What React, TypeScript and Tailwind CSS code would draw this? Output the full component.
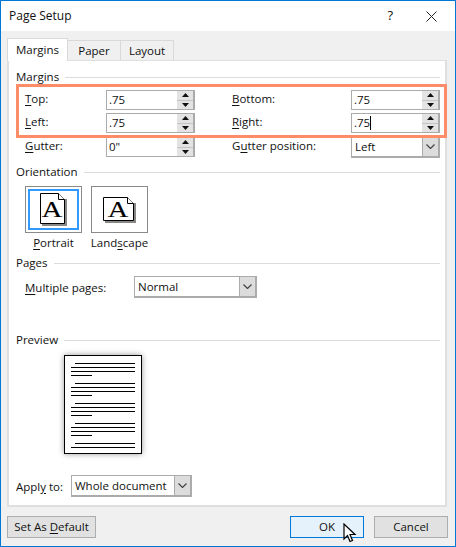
import React from 'react';

const font = { fontFamily: '"Open Sans", "Noto Sans", sans-serif' };

const U: React.FC<{ children: React.ReactNode }> = ({ children }) => <span className="underline underline-offset-2">{children}</span>;

const SectionLabel: React.FC<{ text: string; className?: string }> = ({ text, className }) => (
  <div className={`flex items-center h-4 gap-[6px] ${className ?? ''}`}>
    <span className="text-[11.5px] leading-4 whitespace-nowrap">{text}</span>
    <div className="flex-1 h-px bg-[#dcdcdc]" />
  </div>
);

const Spinner: React.FC<{ value: string; caret?: boolean }> = ({ value, caret }) => (
  <div className="w-[89px] h-[20px] border border-r-2 border-[#ababab] bg-white flex items-center pl-[2px]">
    <span className="flex-1 text-[11.5px] leading-4 flex items-center">
      {value}
      {caret && <span className="inline-block w-px h-[14px] bg-black" />}
    </span>
    <div className="w-[16px] h-[18px] flex flex-col">
      <div className="flex-1 bg-[#e3e3e3] border-b border-[#c4c4c4] flex items-center justify-center">
        <svg width="7" height="4" viewBox="0 0 7 4"><path d="M3.5 0L7 4H0z" fill="#111" /></svg>
      </div>
      <div className="flex-1 bg-[#e3e3e3] flex items-center justify-center">
        <svg width="7" height="4" viewBox="0 0 7 4"><path d="M0 0h7L3.5 4z" fill="#111" /></svg>
      </div>
    </div>
  </div>
);

const Select: React.FC<{ value: string; className: string }> = ({ value, className }) => (
  <div className={`h-[22px] border border-r-2 border-b-2 border-[#ababab] bg-white flex items-center ${className}`}>
    <span className="flex-1 pl-[3px] text-[11.5px] leading-4">{value}</span>
    <div className="w-[16px] h-[19px] bg-[#dcdcdc] border-l border-[#ababab] flex items-center justify-center">
      <svg width="9" height="5" viewBox="0 0 9 5"><path d="M.5.5l4 4 4-4" fill="none" stroke="#444" strokeWidth="1.2" /></svg>
    </div>
  </div>
);

const PageIcon: React.FC<{ landscape?: boolean }> = ({ landscape }) => {
  const w = landscape ? 31 : 25;
  const h = landscape ? 24 : 31;
  return (
    <svg width={w + 2} height={h + 2} viewBox={`0 0 ${w + 2} ${h + 2}`}>
      <path d={`M2 6H${w + 2}V${h + 2}H2z`} fill="#888" />
      <path d={`M.5.5H${w - 6.5}L${w - 0.5} 6.5V${h - 0.5}H.5z`} fill="#fff" stroke="#000" />
      <path d={`M${w - 6.5} .5V6.5H${w - 0.5}`} fill="#fff" stroke="#000" />
      <text
        transform={`translate(${w / 2 - 0.5} ${h / 2 + 8}) scale(1.18 1)`}
        textAnchor="middle"
        fontSize="24"
        stroke="#000"
        strokeWidth="0.15"
        fontFamily='"Liberation Serif", serif'
      >
        A
      </text>
    </svg>
  );
};

const previewLines = [7, 11, 15, 19, 27, 31, 35, 39, 47, 51, 55, 59, 67, 71, 75, 79, 87, 91];

const App: React.FC = () => {
  return (
    <div className="w-[456px] h-[547px] bg-[#f0f0f0] border border-[#0078d7] flex flex-col text-[#111] text-[11.5px]" style={font}>
      {/* title bar */}
      <div className="h-[30px] bg-white flex items-center pl-[8px] pr-[18px] shrink-0">
        <span className="flex-1 text-[12px]">Page Setup</span>
        <span className="text-[13px] mr-[33px]">?</span>
        <svg width="11" height="11" viewBox="0 0 11 11"><path d="M.5.5l10 10M10.5.5l-10 10" stroke="#222" fill="none" /></svg>
      </div>

      {/* tabs */}
      <div className="flex items-end h-[29px] pl-[6px] shrink-0">
        <div className="relative z-10 -mb-px w-[61px] h-[23px] bg-white border border-b-0 border-[#d9d9d9] flex items-center justify-center">Margins</div>
        <div className="w-[53px] h-[20px] border border-l-0 border-b-0 border-[#d9d9d9] flex items-center justify-center">Paper</div>
        <div className="w-[53px] h-[20px] border border-l-0 border-b-0 border-[#d9d9d9] flex items-center justify-center">Layout</div>
      </div>

      {/* panel */}
      <div className="relative w-[440px] h-[447px] ml-[6px] bg-white border-2 border-t border-[#dfdfdf] pt-[8px] pl-[7px] pr-[5px] shrink-0">
        <SectionLabel text="Margins" />

        <div className="grid grid-cols-[81px_89px_37px_119px_89px] mt-[5px] ml-[9px] gap-y-[3px] items-center [&>span]:pb-[2px]">
          <span><U>T</U>op:</span>
          <Spinner value=".75" />
          <span />
          <span><U>B</U>ottom:</span>
          <Spinner value=".75" />
          <span><U>L</U>eft:</span>
          <Spinner value=".75" />
          <span />
          <span><U>R</U>ight:</span>
          <Spinner value=".75" caret />
          <span><U>G</U>utter:</span>
          <Spinner value={'0"'} />
          <span />
          <span>G<U>u</U>tter position:</span>
          <Select value="Left" className="w-[89px]" />
        </div>

        {/* highlight */}
        <div className="absolute left-[7px] top-[23px] w-[431px] h-[54px] border-[3px] border-[#ff8c69] pointer-events-none" />

        <SectionLabel text="Orientation" className="mt-[6px]" />
        <div className="flex gap-[9px] ml-[9px] mt-[6px]">
          <div className="flex flex-col items-center w-[57px]">
            <div className="w-[57px] h-[47px] border border-[#8a8a8a] flex items-center justify-center relative">
              <div className="absolute inset-[2px] border-[2px] border-[#3399ff]" />
              <PageIcon />
            </div>
            <span className="mt-px whitespace-nowrap"><U>P</U>ortrait</span>
          </div>
          <div className="flex flex-col items-center w-[57px]">
            <div className="w-[57px] h-[47px] border border-[#8a8a8a] flex items-center justify-center">
              <PageIcon landscape />
            </div>
            <span className="mt-px whitespace-nowrap">Land<U>s</U>cape</span>
          </div>
        </div>

        <SectionLabel text="Pages" className="mt-[4px]" />
        <div className="flex items-center ml-[9px] mt-[5px]">
          <span className="w-[109px]"><U>M</U>ultiple pages:</span>
          <Select value="Normal" className="w-[123px]" />
        </div>

        <SectionLabel text="Preview" className="mt-[34px]" />
        <div className="mt-[7px] ml-[48px] w-[78px] h-[99px] bg-white border border-black shadow-[0_0_6px_rgba(0,0,0,0.4)]">
          <svg width="76" height="97" viewBox="0 0 76 97">
            {previewLines.map((y, i) => {
              const first = i % 4 === 0;
              const last = i % 4 === 3;
              return <rect key={y} x={first ? 10 : 6} y={y} width={last ? 21 : first ? 60 : 64} height="1" fill="#000" />;
            })}
          </svg>
        </div>

        <div className="flex items-center mt-[21px]">
          <span className="w-[55px]">Appl<U>y</U> to:</span>
          <Select value="Whole document" className="w-[121px]" />
        </div>
      </div>

      {/* footer buttons */}
      <div className="flex items-center pl-[6px] pr-[7px] mt-[9px]">
        <div className="w-[89px] h-[22px] bg-[#e1e1e1] border border-[#adadad] flex items-center justify-center">
          <span>Set As <U>D</U>efault</span>
        </div>
        <div className="flex-1" />
        <div className="relative w-[74px] h-[22px] bg-[#e5f1fb] border border-[#0078d7] flex items-center justify-center">
          OK
          <svg className="absolute left-[52px] top-[6px]" width="14" height="20" viewBox="0 0 14 20">
            <path d="M1 1v15l3.5-3.5 2.5 6 2.5-1-2.5-6h5z" fill="#fff" stroke="#000" strokeWidth="1.2" />
          </svg>
        </div>
        <div className="w-[74px] h-[22px] ml-[10px] bg-[#e1e1e1] border border-[#adadad] flex items-center justify-center">Cancel</div>
      </div>
    </div>
  );
};

export default App;
